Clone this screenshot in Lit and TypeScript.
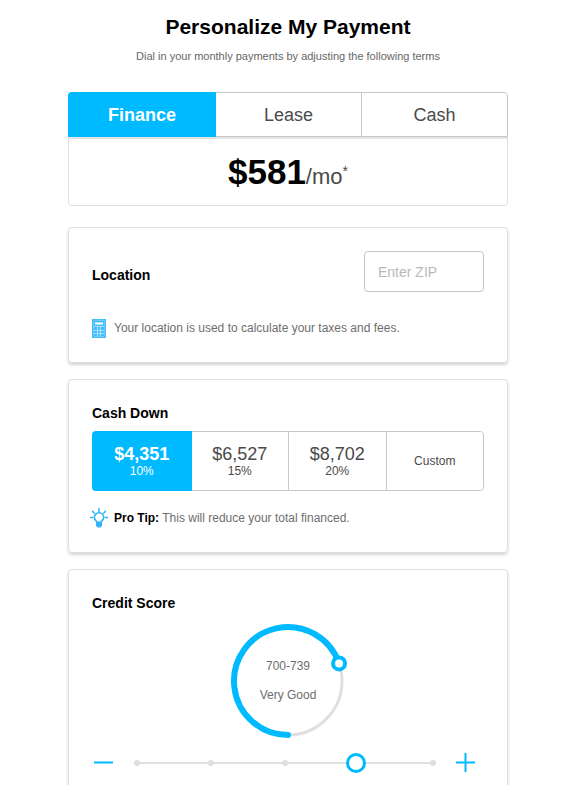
import { LitElement, html, css, svg } from "lit";
import { customElement, state } from "lit/decorators.js";
import { classMap } from "lit/directives/class-map.js";

const TABS = ["Finance", "Lease", "Cash"];

const DOWN_OPTIONS = [
  { amount: "$4,351", percent: "10%" },
  { amount: "$6,527", percent: "15%" },
  { amount: "$8,702", percent: "20%" },
];

const SCORES = [
  { range: "Below 580", label: "Poor" },
  { range: "580-639", label: "Fair" },
  { range: "640-699", label: "Good" },
  { range: "700-739", label: "Very Good" },
  { range: "740+", label: "Excellent" },
];

const GAUGE_RADIUS = 54;
// Clockwise sweep, in degrees from the bottom of the ring, for each score.
const SWEEPS = [60, 120, 185, 251, 359];

@customElement("app-root")
export class AppRoot extends LitElement {
  @state() private tab = 0;
  @state() private down = 0;
  @state() private score = 3;

  static styles = css`
    :host {
      --blue: #00baff;
      --line: #c8c8c8;
      --soft: #dedede;
      display: block;
      padding-left: 1px;
      background: #fff;
      color: #4a4a4a;
      font: 12px/16px "Liberation Sans", Arial, sans-serif;
    }
    * {
      box-sizing: border-box;
    }
    main {
      display: flex;
      flex-direction: column;
      width: calc(100% - 32px);
      max-width: 440px;
      margin: 0 auto;
      padding: 15px 0 24px;
    }
    h1,
    h2,
    p {
      margin: 0;
    }
    h1 {
      color: #000;
      font-size: 21px;
      line-height: 24px;
      text-align: center;
    }
    .subtitle {
      margin-top: 9px;
      color: #666;
      font-size: 11px;
      text-align: center;
    }
    button {
      margin: 0;
      padding: 0;
      border: 0;
      background: #fff;
      color: inherit;
      font: inherit;
      cursor: pointer;
    }
    .segments {
      display: grid;
      grid-auto-flow: column;
      grid-auto-columns: 1fr;
      border: 1px solid var(--line);
    }
    .segment {
      border-left: 1px solid var(--line);
    }
    .segment:first-child {
      border-left: 0;
    }
    .segment.selected {
      z-index: 1;
      margin: -1px;
      background: var(--blue);
      color: #fff;
    }
    .tabs {
      height: 45px;
      margin-top: 28px;
      border-radius: 4px 4px 0 0;
      font-size: 18px;
    }
    .tabs .segment.selected {
      font-weight: bold;
    }
    .tabs .segment:first-child {
      border-radius: 4px 0 0 0;
    }
    .tabs .segment:last-child {
      border-radius: 0 4px 0 0;
    }
    .price {
      height: 69px;
      padding-top: 13px;
      border: 1px solid var(--soft);
      border-top: 2px solid #e4e4e4;
      border-radius: 0 0 4px 4px;
      font-size: 22px;
      line-height: 40px;
      text-align: center;
    }
    .price strong {
      color: #000;
      font-size: 35px;
    }
    .price sup {
      font-size: 14px;
      line-height: 0;
    }
    .cards {
      display: flex;
      flex-direction: column;
      gap: 16px;
      margin-top: 21px;
    }
    .card {
      padding: 23px 23px 24px;
      border: 1px solid var(--soft);
      border-radius: 4px;
      box-shadow: 0 2px 3px rgba(0, 0, 0, 0.17);
    }
    .title {
      display: block;
      color: #000;
      font-size: 14px;
      font-weight: bold;
      line-height: 20px;
    }
    .location {
      display: flex;
      align-items: center;
      justify-content: space-between;
      margin-bottom: 26px;
    }
    .location .title {
      padding-top: 6px;
    }
    .zip {
      width: 120px;
      height: 41px;
      padding: 0 13px;
      border: 1px solid var(--line);
      border-radius: 4px;
      background: #fff;
      color: #4a4a4a;
      font: 14px "Liberation Sans", Arial, sans-serif;
    }
    .zip::placeholder {
      color: #b8b8b8;
      opacity: 1;
    }
    .note {
      display: flex;
      align-items: center;
      gap: 8px;
      height: 20px;
      color: #6e6e6e;
    }
    .note b {
      color: #000;
    }
    .calculator,
    .bulb {
      flex: none;
      display: block;
    }
    .bulb {
      margin: 0 -2px;
    }
    .down {
      height: 60px;
      margin: 8px 0 17px;
      border-radius: 4px;
    }
    .down .segment:first-child {
      border-radius: 4px 0 0 4px;
    }
    .down .segment:last-child {
      border-radius: 0 4px 4px 0;
    }
    .amount {
      display: block;
      padding-top: 2px;
      font-size: 18px;
      line-height: 18px;
    }
    .percent {
      display: block;
    }
    .selected .amount {
      font-weight: bold;
    }
    .gauge {
      display: grid;
      place-items: center;
      margin-top: 8px;
    }
    .gauge > * {
      grid-area: 1 / 1;
    }
    .gauge svg {
      display: block;
    }
    .reading {
      display: flex;
      flex-direction: column;
      gap: 13px;
      padding-bottom: 2px;
      color: #6e6e6e;
      text-align: center;
    }
    .stepper {
      display: flex;
      align-items: center;
      gap: 20px;
      margin-top: 12px;
      padding: 0 8px 0 2px;
    }
    .step {
      flex: none;
      width: 20px;
      height: 20px;
    }
    .step svg {
      display: block;
    }
    .slider {
      flex: 1;
      display: grid;
      align-items: center;
    }
    .slider > * {
      grid-area: 1 / 1;
    }
    .stops {
      display: flex;
      justify-content: space-between;
      background: linear-gradient(#dfdfdf, #dfdfdf) center / 100% 2px no-repeat;
    }
    .stop {
      width: 6px;
      height: 6px;
      border-radius: 50%;
      background: #dfdfdf;
    }
    .range {
      appearance: none;
      width: 100%;
      height: 20px;
      margin: 0;
      background: transparent;
      cursor: pointer;
    }
    .range::-webkit-slider-thumb {
      appearance: none;
      box-sizing: border-box;
      width: 20px;
      height: 20px;
      border: 3px solid var(--blue);
      border-radius: 50%;
      background: #fff;
    }
  `;

  private move(delta: number) {
    this.score = Math.min(SCORES.length - 1, Math.max(0, this.score + delta));
  }

  private renderArc() {
    const angle = (SWEEPS[this.score] * Math.PI) / 180;
    const x = 60 - GAUGE_RADIUS * Math.sin(angle);
    const y = 60 + GAUGE_RADIUS * Math.cos(angle);
    const large = SWEEPS[this.score] > 180 ? 1 : 0;
    return svg`
      <path d="M60 114A54 54 0 ${large} 1 ${x} ${y}" fill="none"
        stroke="#00baff" stroke-width="6" stroke-linecap="round" />
      <circle cx=${x} cy=${y} r="6" fill="#fff" stroke="#00baff" stroke-width="4" />`;
  }

  render() {
    const score = SCORES[this.score];
    return html`
      <main>
        <h1>Personalize My Payment</h1>
        <p class="subtitle">Dial in your monthly payments by adjusting the following terms</p>

        <div class="segments tabs" role="tablist">
          ${TABS.map(
            (name, i) => html`<button
              class=${classMap({ segment: true, selected: this.tab === i })}
              role="tab"
              aria-selected=${this.tab === i}
              @click=${() => (this.tab = i)}
            >${name}</button>`
          )}
        </div>
        <div class="price"><strong>$581</strong>/mo<sup>*</sup></div>

        <div class="cards">
          <section class="card">
            <div class="location">
              <label class="title" for="zip">Location</label>
              <input class="zip" id="zip" type="text" inputmode="numeric" placeholder="Enter ZIP" />
            </div>
            <div class="note">
              <svg class="calculator" width="14" height="19" viewBox="0 0 14 19" aria-hidden="true">
                <rect width="14" height="19" fill="#45bdfc" />
                <rect x="1.5" y="1.5" width="11" height="16" rx="1" fill="none" stroke="#6ccbfd" />
                <rect x="3" y="3.500" width="8" height="2" fill="#fff" />
                <path d="M2 7.500h10M2 11.500h10M2 14.500h10M5.500 7.500v10M8.500 7.500v10" stroke="#a5dffe" />
              </svg>
              <span>Your location is used to calculate your taxes and fees.</span>
            </div>
          </section>

          <section class="card">
            <h2 class="title">Cash Down</h2>
            <div class="segments down" role="group" aria-label="Cash Down">
              ${DOWN_OPTIONS.map(
                (o, i) => html`<button
                  class=${classMap({ segment: true, selected: this.down === i })}
                  aria-pressed=${this.down === i}
                  @click=${() => (this.down = i)}
                ><span class="amount">${o.amount}</span><span class="percent">${o.percent}</span></button>`
              )}
              <button
                class=${classMap({ segment: true, selected: this.down === 3 })}
                aria-pressed=${this.down === 3}
                @click=${() => (this.down = 3)}
              >Custom</button>
            </div>
            <div class="note">
              <svg class="bulb" width="18" height="20" viewBox="0 0 18 20" aria-hidden="true" fill="none" stroke="#2db4fb">
                <path d="M9 0v4M2.200 2.800l2.400 2.600M15.800 2.800l-2.400 2.600M0 9.500h3.200M14.800 9.500H18" stroke-width="1.500" />
                <path d="M7 14.200c0-1.200-2.700-2-2.700-4.700a4.700 4.700 0 0 1 9.400 0c0 2.700-2.700 3.500-2.700 4.700z" stroke-width="1.600" />
                <path d="M6 14.500h6v3L10.500 19.500h-3L6 17.500z" fill="#2db4fb" stroke="none" />
              </svg>
              <span><b>Pro Tip:</b> This will reduce your total financed.</span>
            </div>
          </section>

          <section class="card">
            <h2 class="title">Credit Score</h2>
            <div class="gauge">
              <svg width="120" height="120" viewBox="0 0 120 120" aria-hidden="true">
                <circle cx="60" cy="60" r=${GAUGE_RADIUS} fill="none" stroke="#dfdfdf" stroke-width="3" />
                ${this.renderArc()}
              </svg>
              <div class="reading">
                <span>${score.range}</span>
                <span>${score.label}</span>
              </div>
            </div>
            <div class="stepper">
              <button class="step" aria-label="Lower credit score" @click=${() => this.move(-1)}>
                <svg width="20" height="20" viewBox="0 0 20 20" aria-hidden="true">
                  <path d="M0 9.500h19" stroke="#00baff" stroke-width="2" />
                </svg>
              </button>
              <div class="slider">
                <div class="stops">${SCORES.map(() => html`<span class="stop"></span>`)}</div>
                <input
                  class="range"
                  type="range"
                  aria-label="Credit Score"
                  min="0"
                  max="4"
                  .value=${String(this.score)}
                  @input=${(e: Event) => (this.score = Number((e.target as HTMLInputElement).value))}
                />
              </div>
              <button class="step" aria-label="Raise credit score" @click=${() => this.move(1)}>
                <svg width="20" height="20" viewBox="0 0 20 20" aria-hidden="true">
                  <path d="M0 9.500h19M9.500 0v19" stroke="#00baff" stroke-width="2" />
                </svg>
              </button>
            </div>
          </section>
        </div>
      </main>
    `;
  }
}
